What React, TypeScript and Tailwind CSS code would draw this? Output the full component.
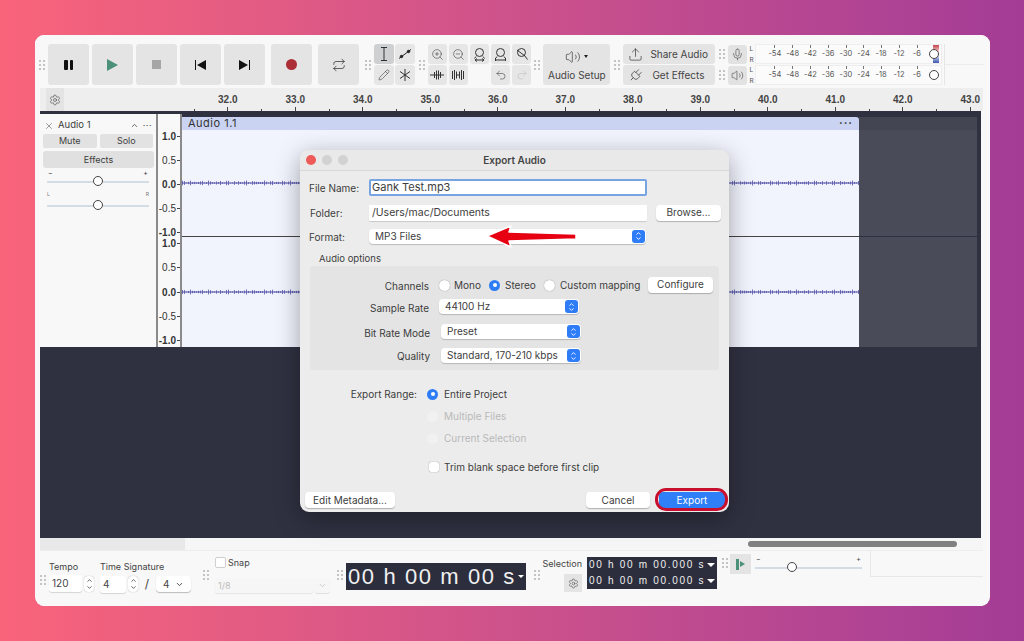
import React from 'react';
import { ChevronDown, ChevronUp, Mic, Pencil, Plug, Redo2, Repeat, Settings, Undo2, Upload, Volume2, X, ZoomIn, ZoomOut } from 'lucide-react';

const font = { fontFamily: 'Inter, "Liberation Sans", sans-serif' };
const sans = { fontFamily: '"Liberation Sans", sans-serif' };

const Grip = ({ className = '' }: { className?: string }) => (
	<div className={`grid grid-cols-2 gap-[2px] shrink-0 ${className}`}>
		{[0, 1, 2, 3, 4, 5].map((i) => (
			<span key={i} className="w-[2px] h-[2px] bg-[#c4c4c4]" />
		))}
	</div>
);

const BigButton = ({ children, className = '' }: { children: React.ReactNode; className?: string }) => (
	<div className={`w-[41px] h-[41px] rounded-[3px] bg-[#e4e4e4] flex items-center justify-center shrink-0 ${className}`}>
		{children}
	</div>
);

const Tool = ({ children, active = false }: { children?: React.ReactNode; active?: boolean }) => (
	<div className={`w-[19.5px] h-[19.5px] rounded-[3px] flex items-center justify-center text-[#333] ${active ? 'bg-[#cfd0d2]' : 'bg-[#e6e6e6]'}`}>
		{children}
	</div>
);

const FitIcon = ({ kind }: { kind: 'sel' | 'proj' | 'width' }) => (
	<svg width="15" height="15" viewBox="0 0 15 15" fill="none" stroke="#333" strokeWidth="1">
		<circle cx="7.5" cy="5.5" r="4" />
		{kind === 'width' ? <path d="M10.5 8.5l3 4M3 3l8 6" /> : <path d="M4 9.5l-1.5 2M11 9.5l1.5 2" />}
		{kind === 'sel' && <path d="M3 13h9M5 11.5L3 13l2 1.5M10 11.5l2 1.5-2 1.5" />}
		{kind === 'proj' && <path d="M2.5 11v3M12.5 11v3M2.5 13h10" />}
	</svg>
);

const TrimIcon = () => (
	<svg width="14" height="12" viewBox="0 0 14 12" fill="none" stroke="#333"><path d="M0 6h14M4.5 3v6M6.5 1.5v9M8.5 1.5v9M10.5 3v6" /></svg>
);

const SilenceIcon = () => (
	<svg width="14" height="12" viewBox="0 0 14 12" fill="none" stroke="#333"><path d="M1.5 2v8M3.5 1v10M5.5 2.5v7M5.5 6h3M8.5 2.5v7M10.5 1v10M12.5 2v8" /></svg>
);

const Meter = ({ clip = false, icon }: { clip?: boolean; icon: React.ReactNode }) => (
	<div className="flex items-center h-[20px]">
		<Grip className="mr-[3px]" />
		<div className="w-[19px] h-[19px] rounded-[3px] bg-[#e2e2e2] flex items-center justify-center text-[#333] shrink-0">{icon}</div>
		<div className="flex flex-col justify-between h-[19px] ml-[2px] w-[6px] text-[6.5px] leading-[8px] text-[#555]">
			<span>L</span>
			<span>R</span>
		</div>
		<div className="relative w-[187px] h-[20px] bg-[#fbfbfb] border border-[#eeeeee] flex items-center pl-[12px] gap-[5.8px] text-[7.5px] text-[#555]">
			{['-54', '-48', '-42', '-36', '-30', '-24', '-18', '-12', '-6'].map((n) => (
				<span key={n} className="w-[12px] text-center relative">
					{n}
					<span className="absolute left-[6px] -top-[3px] w-[1px] h-[3px] bg-[#777]" />
				</span>
			))}
			{clip && <span className="absolute right-[2px] top-0 bottom-0 w-[6px] bg-gradient-to-b from-[#c0404f] via-[#ffffff] to-[#3f56b0]" />}
			<span className="absolute right-[2px] top-[4px] w-[10px] h-[10px] rounded-full border border-[#444] bg-white" />
		</div>
	</div>
);

const Slider = ({ width, pos }: { width: number; pos: number }) => (
	<div className="relative h-[10px]" style={{ width }}>
		<div className="absolute left-0 right-0 top-[5px] h-[2px] bg-[#d4dde6]" />
		<div className="absolute top-0 w-[10px] h-[10px] rounded-full border border-[#444] bg-white" style={{ left: pos }} />
	</div>
);

const wavePath = (seed: number) =>
	Array.from({ length: 340 }, (_, i) => {
		const a = Math.abs(Math.sin(i * 1.7 + seed) + Math.sin(i * 0.31 + seed)) * 1.1 + 0.4;
		return `M${i * 2 + 0.5} ${3 - a}v${a * 2}`;
	}).join('');

const Wave = ({ seed }: { seed: number }) => (
	<svg className="absolute left-0 right-0 w-full h-[6px]" viewBox="0 0 677 6" preserveAspectRatio="none" fill="none" stroke="#5250a8" strokeWidth="0.8">
		<path d="M0 3h677" strokeWidth="1" />
		<path d={wavePath(seed)} />
	</svg>
);

const TimeBox = () => (
	<div className="h-[15.5px] w-[130px] bg-[#2c2e3e] text-[#f0f0f0] text-[10px] tracking-[1.7px] flex items-center justify-between pl-[2px] pr-[2px]" style={sans}>
		<span className="whitespace-nowrap">00 h 00 m 00.000 s</span>
		<span className="w-0 h-0 border-l-[4px] border-r-[4px] border-t-[4px] border-l-transparent border-r-transparent border-t-white" />
	</div>
);

const Updown = () => (
	<span className="w-[13px] h-[13px] rounded-[3px] bg-[#2f7df6] flex flex-col items-center justify-center text-white shrink-0">
		<ChevronUp size={7} strokeWidth={3} className="-mb-[1px]" />
		<ChevronDown size={7} strokeWidth={3} className="-mt-[1px]" />
	</span>
);

const MacSelect = ({ text, className = '' }: { text: string; className?: string }) => (
	<div className={`h-[15px] w-[140px] bg-white rounded-[4px] shadow-[0_1px_1px_rgba(0,0,0,0.2)] flex items-center justify-between pl-[6px] pr-[1px] text-[10px] text-[#3d3d3d] ${className}`}>
		<span className="whitespace-nowrap">{text}</span>
		<Updown />
	</div>
);

const MacButton = ({ text, className = '' }: { text: string; className?: string }) => (
	<div className={`h-[16px] bg-white rounded-[4px] shadow-[0_1px_1px_rgba(0,0,0,0.25)] flex items-center justify-center text-[10px] text-[#3d3d3d] ${className}`}>
		{text}
	</div>
);

const Radio = ({ on = false, off = false }: { on?: boolean; off?: boolean }) => (
	<span className={`w-[11px] h-[11px] rounded-full flex items-center justify-center shrink-0 ${on ? 'bg-[#2f7df6]' : off ? 'bg-[#f1f1f1]' : 'bg-white shadow-[0_0_1px_rgba(0,0,0,0.5)]'}`}>
		{on && <span className="w-[4px] h-[4px] rounded-full bg-white" />}
	</span>
);

const ExportDialog = () => (
	<div className="absolute left-[265px] top-[115px] w-[429px] h-[362px] rounded-[9px] bg-[#ececec] shadow-[0_6px_24px_rgba(0,0,0,0.35)] text-[10px] text-[#3d3d3d] flex flex-col">
		<div className="h-[21px] shrink-0 border-b border-[#d9d9d9] bg-[#e9e9e9] rounded-t-[9px] flex items-center pl-[6px] relative">
			<span className="w-[10px] h-[10px] rounded-full bg-[#ee5a58]" />
			<span className="w-[10px] h-[10px] rounded-full bg-[#d2d2d2] ml-[6px]" />
			<span className="w-[10px] h-[10px] rounded-full bg-[#d2d2d2] ml-[6px]" />
			<span className="absolute inset-0 flex items-center justify-center font-semibold text-[#444]">Export Audio</span>
		</div>
		<div className="flex items-center mt-[8px] pl-[9px] h-[17px]">
			<span className="w-[60px] pt-[2px]">File Name:</span>
			<div className="w-[278px] h-[17px] bg-white border-2 border-[#78a5e2] rounded-[2px] pl-[1px] flex items-center text-[11px]">Gank Test.mp3</div>
		</div>
		<div className="flex items-center mt-[8px] pl-[10px] h-[17px]">
			<span className="w-[59px] pt-[2px]">Folder:</span>
			<div className="w-[278px] h-[16px] bg-white rounded-[1px] pl-[3px] flex items-center text-[10.5px] shadow-[0_1px_1px_rgba(0,0,0,0.15)]">/Users/mac/Documents</div>
			<MacButton text="Browse..." className="w-[65px] ml-[9px]" />
		</div>
		<div className="flex items-center mt-[7px] pl-[9px] h-[16px]">
			<span className="w-[60px] pt-[2px]">Format:</span>
			<MacSelect text="MP3 Files" className="w-[277px]" />
		</div>
		<div className="mt-[9px] pl-[19px] text-[9.5px] leading-[12px]">Audio options</div>
		<div className="mt-[1px] mx-[10px] h-[104px] rounded-[3px] bg-[#e4e4e4] flex flex-col pt-[11px]">
			<div className="flex items-center h-[15px]">
				<span className="w-[119px] text-right pt-[3px]">Channels</span>
				<div className="ml-[10px] pt-[1px] flex items-center w-[50px] gap-[4px]"><Radio /><span>Mono</span></div>
				<div className="pt-[1px] flex items-center w-[55px] gap-[5px]"><Radio on /><span>Stereo</span></div>
				<div className="pt-[1px] flex items-center w-[105px] gap-[5px]"><Radio /><span className="whitespace-nowrap">Custom mapping</span></div>
				<MacButton text="Configure" className="w-[65px] ml-[-1px]" />
			</div>
			<div className="flex items-center h-[15px] mt-[7px]">
				<span className="w-[119px] text-right pt-[3px]">Sample Rate</span>
				<MacSelect text="44100 Hz" className="ml-[10px]" />
			</div>
			<div className="flex items-center h-[15px] mt-[10px]">
				<span className="w-[120px] text-right pt-[3px]">Bit Rate Mode</span>
				<MacSelect text="Preset" className="ml-[11px] w-[139px]" />
			</div>
			<div className="flex items-center h-[15px] mt-[9px]">
				<span className="w-[120px] text-right pt-[2px]">Quality</span>
				<MacSelect text="Standard, 170-210 kbps" className="ml-[11px] w-[139px]" />
			</div>
		</div>
		<div className="flex items-center mt-[18px] h-[12px]">
			<span className="w-[117px] text-right">Export Range:</span>
			<div className="ml-[10px] flex items-center gap-[6px]"><Radio on /><span>Entire Project</span></div>
		</div>
		<div className="flex items-center mt-[10px] h-[12px] pl-[127px] gap-[6px] text-[#b9b9b9]"><Radio off /><span>Multiple Files</span></div>
		<div className="flex items-center mt-[10px] h-[12px] pl-[127px] gap-[6px] text-[#b9b9b9]"><Radio off /><span>Current Selection</span></div>
		<div className="flex items-center mt-[17px] h-[12px] pl-[129px] gap-[5px]">
			<span className="w-[10px] h-[10px] rounded-[2px] bg-white shadow-[0_0_1px_rgba(0,0,0,0.6)]" />
			<span>Trim blank space before first clip</span>
		</div>
		<div className="flex items-center mt-[19px] pl-[5px]">
			<MacButton text="Edit Metadata..." className="w-[90px]" />
			<MacButton text="Cancel" className="w-[64px] ml-[191px]" />
			<div className="relative ml-[9px] w-[66px] h-[16px] rounded-[4px] bg-[#2f80f8] text-white flex items-center justify-center">
				Export
				<span className="absolute -left-[4px] -right-[3px] -top-[4px] -bottom-[3px] rounded-[11px] border-[3px] border-[#c8102e]" />
			</div>
		</div>
		<svg className="absolute left-[184px] top-[74px]" width="96" height="25" viewBox="0 0 96 25">
			<path d="M3 12L27 2l-2 6 67 2v5l-67 2 2 6z" fill="#e60012" stroke="#ffffff" strokeWidth="1.5" strokeLinejoin="round" />
		</svg>
	</div>
);

const Ruler = () => (
	<div className="h-[23px] bg-[#eeeeee] flex items-end relative overflow-hidden">
		<div className="absolute left-[6px] top-0 w-[18px] h-[23px] bg-[#e4e4e4] flex items-center justify-center text-[#444]">
			<Settings size={12} strokeWidth={1.2} />
		</div>
		<div className="w-[154px] shrink-0" />
		{[32, 33, 34, 35, 36, 37, 38, 39, 40, 41, 42, 43].map((n) => (
			<div key={n} className="w-[67.5px] shrink-0 relative flex flex-col items-center">
				<span className="text-[10px] leading-[14px] font-semibold text-[#444]" style={sans}>{n}.0</span>
				<span className="w-[1px] h-[4px] bg-[#444]" />
				<span className="absolute left-[-0.5px] bottom-0 w-[1px] h-[2px] bg-[#444]" />
			</div>
		))}
	</div>
);

const Scale = () => (
	<div className="h-full flex flex-col justify-between text-[10px] text-[#333]" style={sans}>
		{['1.0', '0.5', '0.0', '-0.5', '-1.0'].map((m) => (
			<span key={m} className={`flex items-center justify-end leading-[11px] ${m.includes('5') ? 'font-normal' : 'font-bold'}`}>
				{m}
				<span className="w-[3px] h-[1px] bg-[#444] ml-[1px]" />
			</span>
		))}
	</div>
);

const TrackHeader = () => (
	<div className="w-[118px] shrink-0 bg-[#f8f8f8] border-r-2 border-[#8a8a8a] px-[3px] pt-[4px] text-[9px] text-[#3d3d3d]">
		<div className="flex items-center h-[15px] pl-[1px]">
			<X size={10} strokeWidth={1.2} />
			<span className="ml-[4px] text-[9.5px]">Audio 1</span>
			<ChevronUp size={9} className="ml-auto mr-[4px]" />
			<span className="mr-[1px] tracking-[0.5px]">···</span>
		</div>
		<div className="flex gap-[3px] mt-[1px]">
			<div className="w-[54px] h-[14px] bg-[#e2e2e2] rounded-[2px] flex items-center justify-center">Mute</div>
			<div className="w-[54px] h-[14px] bg-[#e2e2e2] rounded-[2px] flex items-center justify-center">Solo</div>
		</div>
		<div className="w-[111px] h-[17px] mt-[3px] bg-[#e0e0e0] rounded-[3px] flex items-center justify-center">Effects</div>
		<div className="flex justify-between text-[7px] leading-[6px] px-[5px] mt-[2px]"><span>−</span><span>+</span></div>
		<div className="ml-[4px]"><Slider width={102} pos={46} /></div>
		<div className="flex justify-between text-[5px] leading-[6px] text-[#777] px-[4px] mt-[5px]"><span>L</span><span>R</span></div>
		<div className="ml-[4px] mt-[3px]"><Slider width={102} pos={46} /></div>
	</div>
);

const Tracks = () => (
	<div className="h-[233px] flex bg-[#2f3141] mr-[2px] shrink-0">
		<TrackHeader />
		<div className="w-[24px] shrink-0 bg-[#f8f8f8] border-r-2 border-[#8a8a8a] flex flex-col pt-[17px]">
			<div className="h-[107px]"><Scale /></div>
			<div className="h-[109px] pb-[1px]"><Scale /></div>
		</div>
		<div className="w-[677px] shrink-0 flex flex-col pt-[3px]">
			<div className="h-[13px] bg-[#cad4f2] rounded-tr-[3px] flex items-center justify-between pl-[6px] pr-[6px] text-[11px] tracking-[0.5px] text-[#333]">
				<span>Audio 1.1</span>
				<span className="font-bold tracking-[1px]">···</span>
			</div>
			<div className="relative h-[107px] bg-[#f1f4fd] border-b border-[#444] flex items-center"><Wave seed={1} /></div>
			<div className="relative h-[110px] bg-[#f1f4fd] flex items-center"><Wave seed={4} /></div>
		</div>
		<div className="w-[118px] shrink-0 flex flex-col pt-[3px]">
			<div className="h-[13px] bg-[#434553]" />
			<div className="h-[107px] bg-[#494b59] border-b border-[#2f3141]" />
			<div className="h-[110px] bg-[#494b59]" />
		</div>
	</div>
);

const Toolbar = () => (
	<div className="h-[53px] flex items-center shrink-0 bg-[#f8f8f8] pt-[6px]">
		<Grip className="ml-[4px] mr-[3px]" />
		<div className="flex gap-[3px]">
			<BigButton>
				<span className="flex gap-[2px]"><span className="w-[3.5px] h-[10px] bg-[#111] rounded-[1px]" /><span className="w-[3.5px] h-[10px] bg-[#111] rounded-[1px]" /></span>
			</BigButton>
			<BigButton><span className="w-0 h-0 border-y-[6px] border-y-transparent border-l-[11px] border-l-[#4b9079]" /></BigButton>
			<BigButton><span className="w-[9px] h-[9px] bg-[#a6a6a6]" /></BigButton>
			<BigButton>
				<span className="flex items-center"><span className="w-[1px] h-[10px] bg-[#111] mr-[1px]" /><span className="w-0 h-0 border-y-[5px] border-y-transparent border-r-[9px] border-r-[#111]" /></span>
			</BigButton>
			<BigButton>
				<span className="flex items-center"><span className="w-0 h-0 border-y-[5px] border-y-transparent border-l-[9px] border-l-[#111]" /><span className="w-[1px] h-[10px] bg-[#111] ml-[1px]" /></span>
			</BigButton>
			<BigButton className="ml-[3px]"><span className="w-[11px] h-[11px] rounded-full bg-[#ab2f35]" /></BigButton>
			<BigButton className="ml-[3px] text-[#333]"><Repeat size={14} strokeWidth={1.3} /></BigButton>
		</div>
		<Grip className="ml-[6px] mr-[3px]" />
		<div className="grid grid-cols-2 gap-[1.5px]">
			<Tool active>
				<svg width="10" height="14" viewBox="0 0 10 14" fill="none" stroke="#333"><path d="M2 .5h6M2 13.5h6M5 .5v13" /></svg>
			</Tool>
			<Tool>
				<svg width="14" height="12" viewBox="0 0 14 12" fill="none" stroke="#222"><path d="M1 10.5l12-9" /><circle cx="3.5" cy="8.5" r="1.2" fill="#222" /><circle cx="10.5" cy="3.5" r="1.2" fill="#222" /></svg>
			</Tool>
			<Tool><Pencil size={12} strokeWidth={1.1} /></Tool>
			<Tool>
				<svg width="12" height="12" viewBox="0 0 12 12" fill="none" stroke="#333"><path d="M6 0v12M1 2.5l10 7M11 2.5l-10 7" /></svg>
			</Tool>
		</div>
		<Grip className="ml-[4px] mr-[3px]" />
		<div className="grid grid-cols-5 gap-x-[1.6px] gap-y-[1.5px]">
			<Tool><ZoomIn size={13} strokeWidth={1} /></Tool>
			<Tool><ZoomOut size={13} strokeWidth={1} /></Tool>
			<Tool><FitIcon kind="sel" /></Tool>
			<Tool><FitIcon kind="proj" /></Tool>
			<Tool><FitIcon kind="width" /></Tool>
			<Tool><TrimIcon /></Tool>
			<Tool><SilenceIcon /></Tool>
			<div />
			<Tool><Undo2 size={12} strokeWidth={1.1} /></Tool>
			<Tool><span className="text-[#bcbcbc]"><Redo2 size={12} strokeWidth={1.1} /></span></Tool>
		</div>
		<Grip className="ml-[3px] mr-[3px]" />
		<div className="w-[67px] h-[41px] rounded-[3px] bg-[#e4e4e4] flex flex-col items-center justify-center text-[10px] text-[#444] shrink-0">
			<span className="flex items-center gap-[3px] h-[20px] text-[#333]"><Volume2 size={16} strokeWidth={1} /><span className="w-0 h-0 border-x-[2.5px] border-x-transparent border-t-[3px] border-t-[#222]" /></span>
			<span className="mt-[1px]">Audio Setup</span>
		</div>
		<Grip className="ml-[4px] mr-[3px]" />
		<div className="flex flex-col gap-[1px] w-[92px] shrink-0 text-[10px] text-[#444]">
			<div className="h-[20px] rounded-[3px] bg-[#e4e4e4] flex items-center pl-[5px] text-[#333]"><Upload size={15} strokeWidth={1.1} /><span className="ml-[7px] text-[#444]">Share Audio</span></div>
			<div className="h-[20px] rounded-[3px] bg-[#e4e4e4] flex items-center pl-[5px] text-[#333]"><Plug size={15} strokeWidth={1.1} className="rotate-45" /><span className="ml-[9px] text-[#444]">Get Effects</span></div>
		</div>
		<div className="ml-[4px] flex flex-col gap-[1px] border-r border-[#e6e6e6] pr-[2px] shrink-0">
			<Meter clip icon={<Mic size={13} strokeWidth={1} />} />
			<Meter icon={<Volume2 size={13} strokeWidth={1} />} />
		</div>
		<div className="flex-1 h-[1px] bg-[#ececec] mr-[6px]" />
	</div>
);

const Stepper = () => (
	<span className="w-[10px] h-[16px] rounded-[4px] bg-white shadow-[0_0_1px_rgba(0,0,0,0.4)] flex flex-col items-center justify-center text-[#333] shrink-0">
		<ChevronUp size={7} strokeWidth={2.5} />
		<ChevronDown size={7} strokeWidth={2.5} />
	</span>
);

const BottomBar = () => (
	<div className="flex-1 flex items-start bg-[#f8f8f8] border-t border-[#eeeeee] text-[9px] text-[#444]">
		<Grip className="mt-[24px]" />
		<div className="ml-[3px] mt-[11px] shrink-0">
			<div className="h-[9px] leading-[9px]">Tempo</div>
			<div className="flex items-center mt-[4px] gap-[2px]">
				<span className="w-[33px] h-[17px] bg-white shadow-[0_1px_1px_rgba(0,0,0,0.15)] rounded-[3px] flex items-center pl-[3px] text-[10px]">120</span>
				<Stepper />
			</div>
		</div>
		<div className="ml-[6px] mt-[11px] shrink-0">
			<div className="h-[9px] leading-[9px] whitespace-nowrap">Time Signature</div>
			<div className="flex items-center mt-[4px] gap-[2px]">
				<span className="w-[26px] h-[17px] bg-white shadow-[0_1px_1px_rgba(0,0,0,0.15)] rounded-[3px] flex items-center pl-[3px] text-[10px]">4</span>
				<Stepper />
				<span className="w-[14px] text-center text-[12px]">/</span>
				<span className="w-[35px] h-[16px] bg-white shadow-[0_1px_1px_rgba(0,0,0,0.25)] rounded-[4px] flex items-center justify-between px-[7px] text-[10px]">4<ChevronDown size={9} strokeWidth={2.5} /></span>
			</div>
		</div>
		<Grip className="ml-[12px] mt-[19px]" />
		<div className="ml-[6px] mt-[6px] shrink-0">
			<div className="flex items-center gap-[2px] h-[11px]">
				<span className="w-[11px] h-[11px] rounded-[2px] bg-white border border-[#cfcfcf]" />
				<span>Snap</span>
			</div>
			<div className="flex items-center mt-[10px] gap-[2px]">
				<span className="w-[98px] h-[15px] bg-[#f6f6f6] shadow-[0_1px_1px_rgba(0,0,0,0.08)] rounded-[3px] flex items-center pl-[3px] text-[#bdbdbd]">1/8</span>
				<span className="w-[15px] h-[15px] bg-[#f6f6f6] shadow-[0_1px_1px_rgba(0,0,0,0.1)] rounded-[3px] flex items-center justify-center text-[#bdbdbd]"><ChevronDown size={9} /></span>
			</div>
		</div>
		<Grip className="ml-[7px] mt-[19px]" />
		<div className="ml-[3px] mt-[12px] w-[180px] h-[27px] shrink-0 bg-[#2c2e3e] text-[#f0f0f0] text-[22px] tracking-[1.6px] flex items-center justify-between pl-[2px] pr-[2px] whitespace-nowrap" style={sans}>
			<span>00 h 00 m 00 s</span>
			<span className="w-0 h-0 border-x-[3px] border-x-transparent border-t-[3px] border-t-white shrink-0" />
		</div>
		<Grip className="ml-[8px] mt-[19px]" />
		<div className="ml-[3px] mt-[7px] w-[39px] shrink-0 flex flex-col items-end">
			<span className="h-[12px] leading-[12px]">Selection</span>
			<span className="mt-[4px] w-[18px] h-[18px] bg-[#e4e4e4] flex items-center justify-center"><Settings size={11} strokeWidth={1.2} /></span>
		</div>
		<div className="ml-[5px] mt-[6px] flex flex-col gap-[0.5px] shrink-0">
			<TimeBox />
			<TimeBox />
		</div>
		<Grip className="ml-[5px] mt-[7px]" />
		<div className="ml-[2px] mt-[3px] w-[21px] h-[20px] shrink-0 bg-[#e4e4e4] flex items-center justify-center gap-[1px]">
			<span className="w-[2.5px] h-[11px] bg-[#4b9079]" />
			<span className="w-0 h-0 border-y-[3.5px] border-y-transparent border-l-[5px] border-l-[#4b9079]" />
		</div>
		<div className="ml-[4px] mt-[4px] w-[107px] shrink-0">
			<div className="flex justify-between text-[7px] leading-[7px] px-[1px]"><span>−</span><span>+</span></div>
			<Slider width={107} pos={32} />
		</div>
		<div className="ml-[8px] h-[26px] flex-1 border-l border-b border-[#e8e8e8]" />
	</div>
);

export default function App() {
	return (
		<div className="w-[1024px] h-[641px] overflow-hidden bg-gradient-to-r from-[#f9647a] to-[#a43c96] pl-[35px] pt-[35px]" style={font}>
			<div className="relative w-[955px] h-[571px] rounded-[9px] overflow-hidden bg-[#f8f8f8] flex flex-col">
				<Toolbar />
				<div className="ml-[5px] mr-[7px] flex flex-col flex-1 min-h-0">
					<Ruler />
					<div className="h-[3px] bg-[#2f3141] mr-[2px] shrink-0" />
					<Tracks />
					<div className="h-[191px] bg-[#2f3141] mr-[2px] shrink-0" />
					<div className="h-[12px] flex items-center bg-[#f6f6f6] relative shrink-0">
						<div className="w-[145px] h-full bg-[#e8e8e8]" />
						<div className="ml-[563px] w-[209px] h-[6px] rounded-full bg-[#808080]" />
					</div>
					<BottomBar />
				</div>
				<ExportDialog />
			</div>
		</div>
	);
}
